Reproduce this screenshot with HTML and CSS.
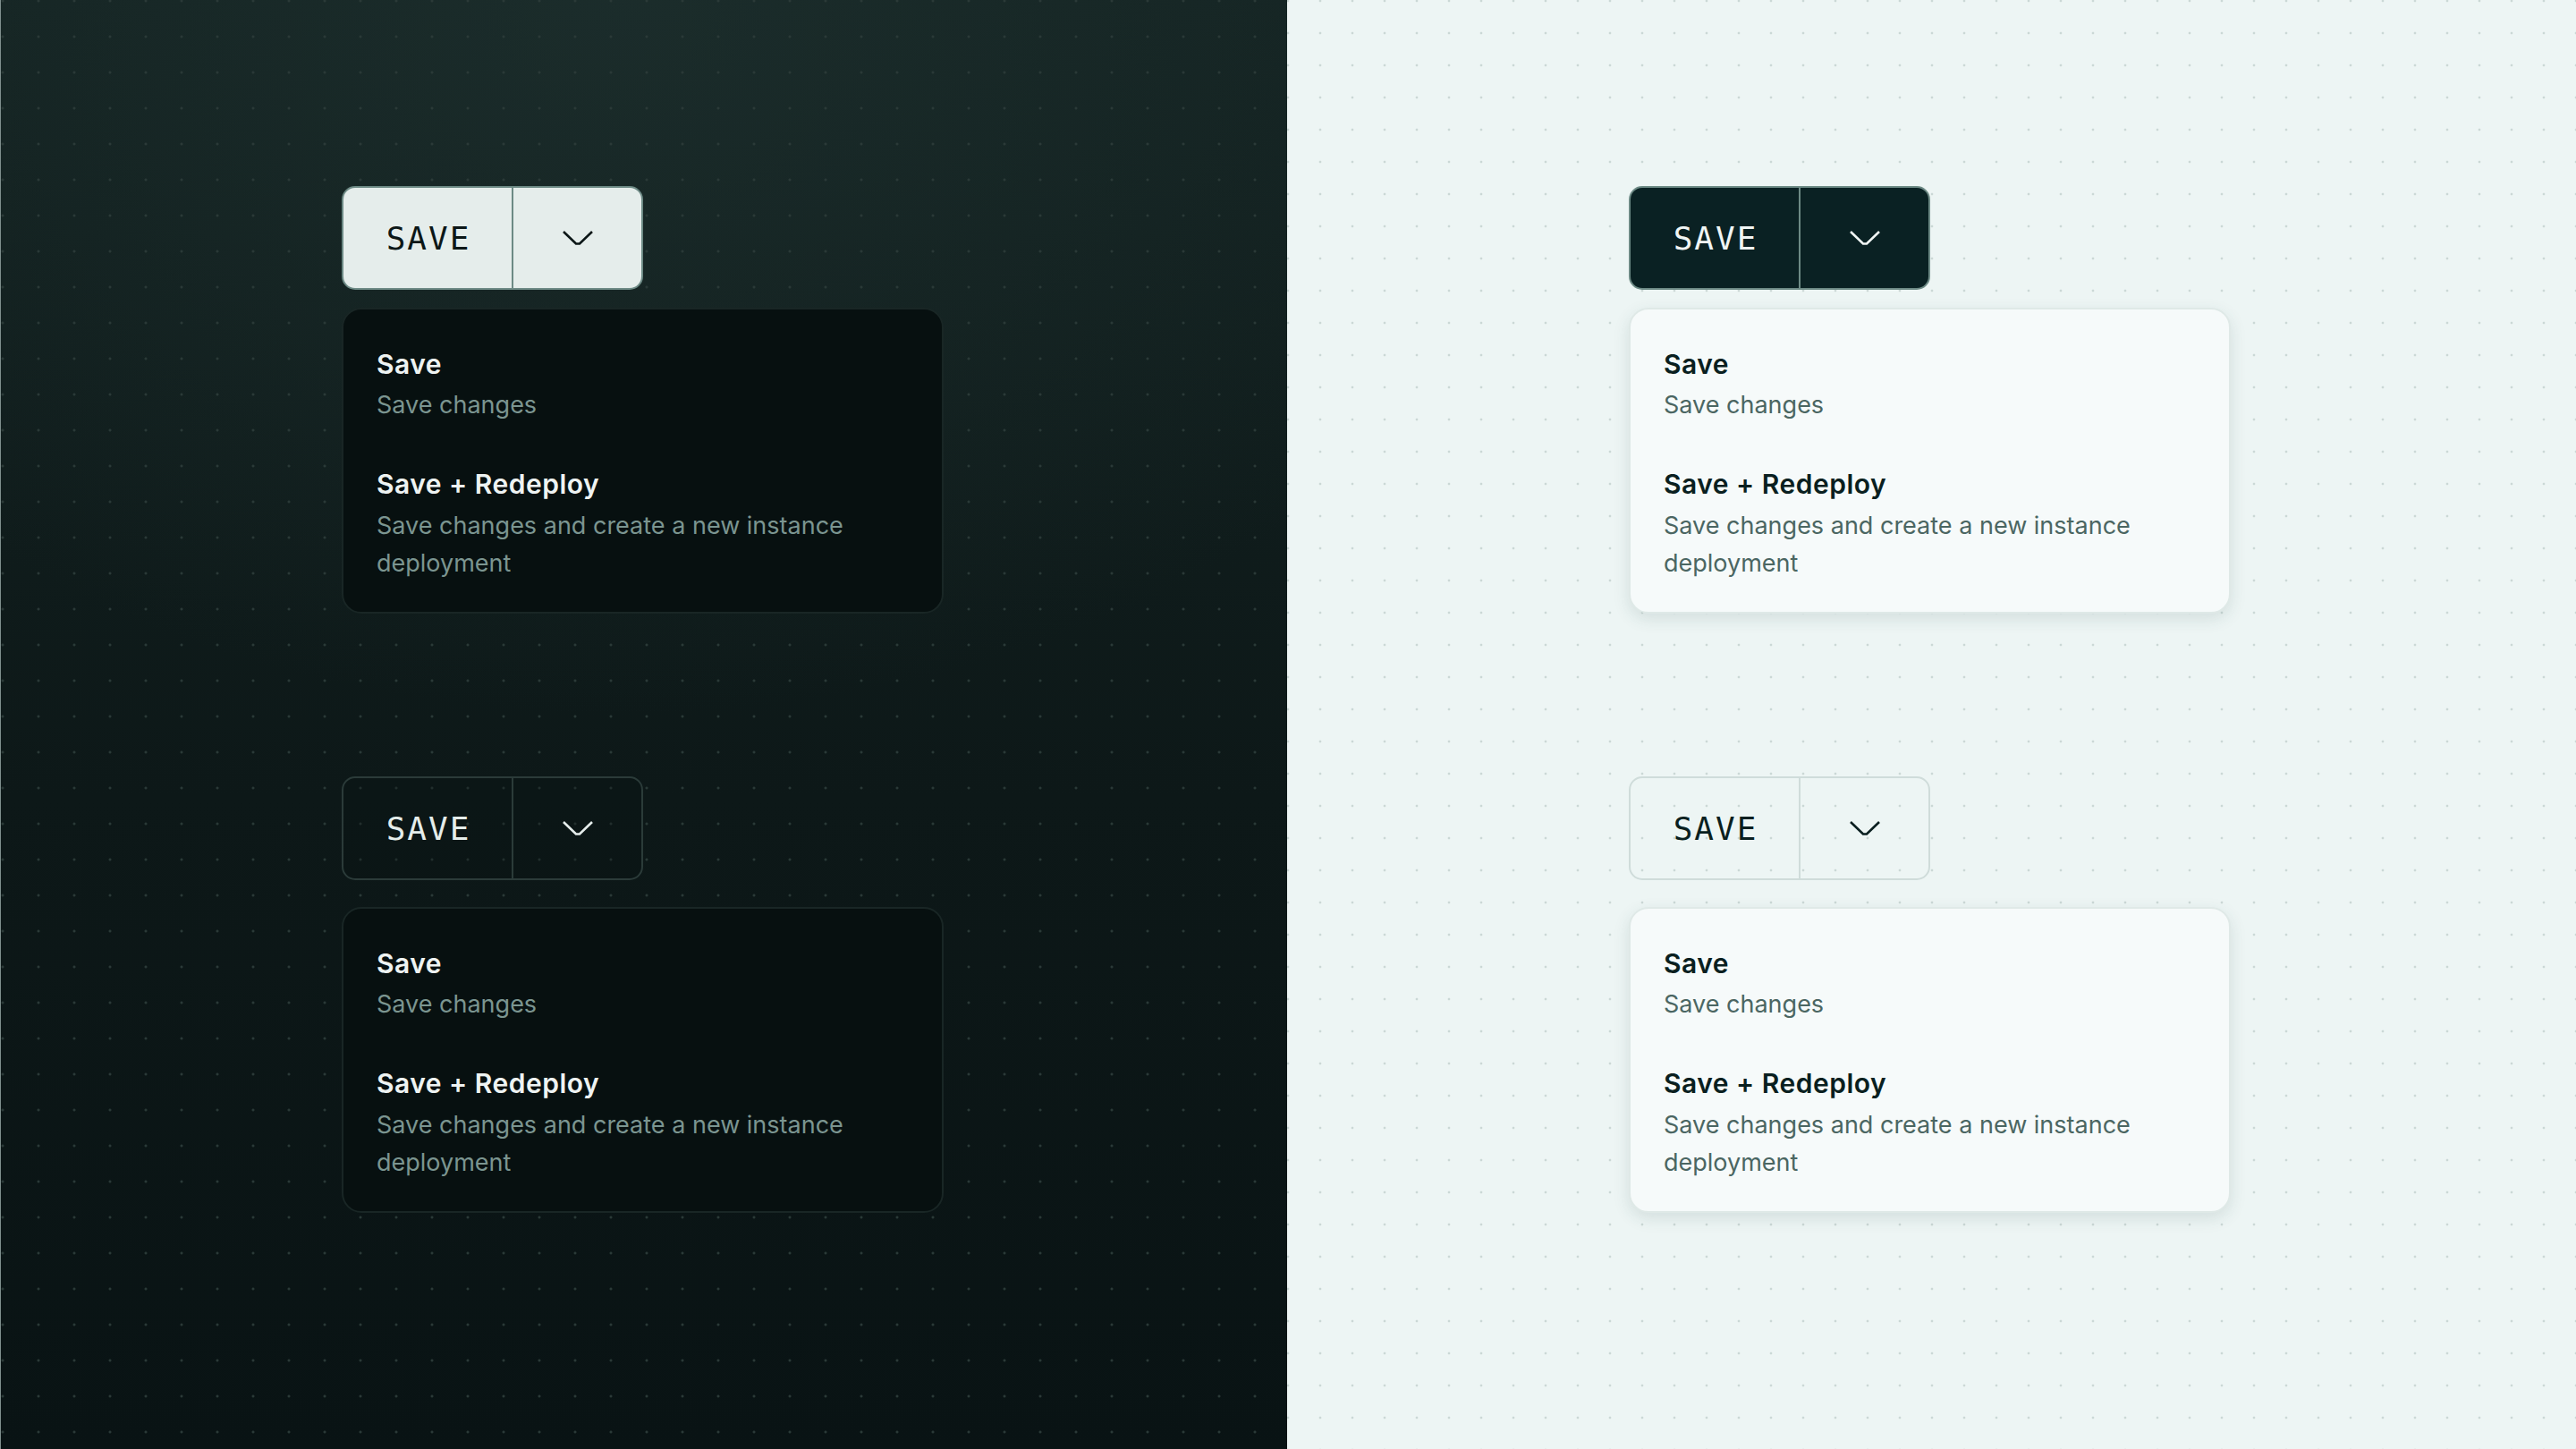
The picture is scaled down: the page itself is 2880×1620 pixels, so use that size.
FILE: index.html
```html
<!DOCTYPE html>
<html lang="en">
<head>
    <meta charset="UTF-8">
    <meta name="viewport" content="width=device-width, initial-scale=1.0">
    <title>Split Button</title>
    <link rel="stylesheet" href="styles.css">
</head>
<body>
    <div class="page">

        <!-- Dark theme -->
        <section class="panel panel-dark">
            <div class="group">
                <div class="split-btn split-btn-filled-light">
                    <span class="split-label">SAVE</span>
                    <span class="split-toggle">
                        <svg class="chevron" viewBox="0 0 36 18"><path d="M2 2 L16 15.5 H20 L34 2"/></svg>
                    </span>
                </div>
                <div class="menu menu-dark">
                    <div class="menu-item">
                        <div class="menu-title">Save</div>
                        <div class="menu-desc">Save changes</div>
                    </div>
                    <div class="menu-item">
                        <div class="menu-title">Save + Redeploy</div>
                        <div class="menu-desc">Save changes and create a new instance deployment</div>
                    </div>
                </div>
            </div>

            <div class="group group-second">
                <div class="split-btn split-btn-outline-dark">
                    <span class="split-label">SAVE</span>
                    <span class="split-toggle">
                        <svg class="chevron" viewBox="0 0 36 18"><path d="M2 2 L16 15.5 H20 L34 2"/></svg>
                    </span>
                </div>
                <div class="menu menu-dark">
                    <div class="menu-item">
                        <div class="menu-title">Save</div>
                        <div class="menu-desc">Save changes</div>
                    </div>
                    <div class="menu-item">
                        <div class="menu-title">Save + Redeploy</div>
                        <div class="menu-desc">Save changes and create a new instance deployment</div>
                    </div>
                </div>
            </div>
        </section>

        <!-- Light theme -->
        <section class="panel panel-light">
            <div class="group">
                <div class="split-btn split-btn-filled-dark">
                    <span class="split-label">SAVE</span>
                    <span class="split-toggle">
                        <svg class="chevron" viewBox="0 0 36 18"><path d="M2 2 L16 15.5 H20 L34 2"/></svg>
                    </span>
                </div>
                <div class="menu menu-light">
                    <div class="menu-item">
                        <div class="menu-title">Save</div>
                        <div class="menu-desc">Save changes</div>
                    </div>
                    <div class="menu-item">
                        <div class="menu-title">Save + Redeploy</div>
                        <div class="menu-desc">Save changes and create a new instance deployment</div>
                    </div>
                </div>
            </div>

            <div class="group group-second">
                <div class="split-btn split-btn-outline-light">
                    <span class="split-label">SAVE</span>
                    <span class="split-toggle">
                        <svg class="chevron" viewBox="0 0 36 18"><path d="M2 2 L16 15.5 H20 L34 2"/></svg>
                    </span>
                </div>
                <div class="menu menu-light">
                    <div class="menu-item">
                        <div class="menu-title">Save</div>
                        <div class="menu-desc">Save changes</div>
                    </div>
                    <div class="menu-item">
                        <div class="menu-title">Save + Redeploy</div>
                        <div class="menu-desc">Save changes and create a new instance deployment</div>
                    </div>
                </div>
            </div>
        </section>

    </div>
</body>
</html>
```

FILE: styles.css
```css
body {
    margin: 0;
    padding: 0;
    font-family: Inter, "Noto Sans", sans-serif;
}

.page {
    display: flex;
    width: 2880px;
    height: 1620px;
    overflow: hidden;
}

.panel {
    display: flex;
    flex-direction: column;
    padding: 208px 0 0 382px;
    box-sizing: border-box;
    height: 100%;
}

/* Dark side: soft glow at the top, dot grid */
.panel-dark {
    width: 1439px;
    padding-left: 381px;
    border-left: 1px solid #7f8f8d;
    background-color: #0d1818;
    background-image:
        radial-gradient(circle, #2a3937 1.2px, transparent 1.8px),
        radial-gradient(ellipse 1100px 800px at 48% 0%, rgba(36, 56, 54, 0.45), rgba(36, 56, 54, 0) 100%),
        linear-gradient(180deg, #142322 0%, #0d1818 55%, #091314 100%);
    background-size: 40px 40px, 100% 100%, 100% 100%;
    background-position: -18px -19px, 0 0, 0 0;
}

/* Light side */
.panel-light {
    flex: 1;
    padding-left: 382px;
    background-color: #edf5f4;
    background-image: radial-gradient(circle, #cbd8d6 1.1px, transparent 1.7px);
    background-size: 36px 36px;
    background-position: -17px -17px;
}

.group {
    display: flex;
    flex-direction: column;
    align-items: flex-start;
}

.group-second {
    margin-top: 182px;
}

/* Split button */
.split-btn {
    display: flex;
    height: 116px;
    box-sizing: border-box;
    border: 2px solid;
    border-radius: 15px;
    overflow: hidden;
}

.split-label {
    width: 188px;
    display: flex;
    align-items: center;
    justify-content: center;
    font-family: "DejaVu Sans Mono", "Liberation Mono", monospace;
    font-size: 36px;
    letter-spacing: 2px;
    padding-left: 2px;
    box-sizing: border-box;
}

.split-toggle {
    width: 143px;
    display: flex;
    align-items: center;
    justify-content: center;
    border-left: 2px solid;
}

.chevron {
    width: 36px;
    height: 18px;
    fill: none;
    stroke: currentColor;
    stroke-width: 2.6;
}

.split-btn-filled-light {
    background-color: #e5edeb;
    border-color: #6d8a85;
    color: #0c1717;
}

.split-btn-filled-light .split-toggle {
    border-left-color: #6d8a85;
}

.split-btn-outline-dark {
    background-color: rgba(6, 14, 14, 0.25);
    border-color: #2b3b39;
    color: #e5edeb;
}

.split-btn-outline-dark .split-toggle {
    border-left-color: #2b3b39;
}

.split-btn-filled-dark {
    background-color: #0a2123;
    border-color: #6d8a85;
    color: #f0f5f4;
}

.split-btn-filled-dark .split-toggle {
    border-left-color: #6d8a85;
}

.split-btn-outline-light {
    background-color: transparent;
    border-color: #cfdcda;
    color: #0a1f20;
}

.split-btn-outline-light .split-toggle {
    border-left-color: #cfdcda;
}

/* Dropdown menu */
.menu {
    width: 673px;
    box-sizing: border-box;
    margin-top: 20px;
    padding: 43px 37px 33px 37px;
    border: 2px solid;
    border-radius: 22px;
    display: flex;
    flex-direction: column;
    gap: 50px;
}

.group-second .menu {
    margin-top: 30px;
}

.menu-title {
    font-size: 30px;
    font-weight: 600;
    line-height: 36px;
    letter-spacing: 0.5px;
}

.menu-desc {
    font-size: 27px;
    line-height: 40px;
    margin-top: 8px;
}

.menu-item:last-child .menu-desc {
    line-height: 42px;
}

.menu-dark {
    background-color: #071010;
    border-color: #192625;
}

.menu-dark .menu-title {
    color: #eef3f2;
}

.menu-dark .menu-desc {
    color: #7b9590;
}

.menu-light {
    background-color: #f6fafa;
    border-color: #dfe9e7;
    box-shadow: 0 6px 18px rgba(40, 80, 76, 0.13);
}

.menu-light .menu-title {
    color: #0a1f20;
}

.menu-light .menu-desc {
    color: #4b6662;
}
```
